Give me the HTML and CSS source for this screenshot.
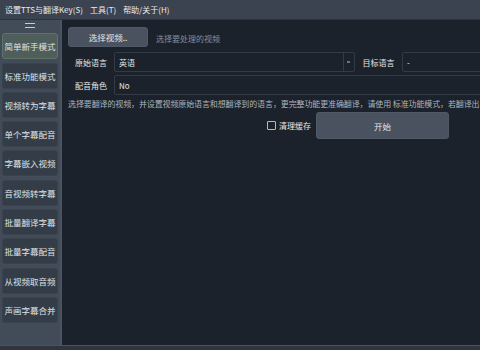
FILE: index.html
```html
<!DOCTYPE html>
<html lang="zh-CN">
<head>
    <meta charset="UTF-8">
    <title>pyVideoTrans</title>
    <link rel="stylesheet" href="styles.css">
</head>
<body>
    <div class="window">
        <div class="menubar">
            <span class="menu-item">设置TTS与翻译Key(S)</span>
            <span class="menu-item">工具(T)</span>
            <span class="menu-item">帮助/关于(H)</span>
        </div>

        <div class="body">
            <div class="sidebar">
                <div class="handle"></div>
                <button class="side-btn active">简单新手模式</button>
                <button class="side-btn">标准功能模式</button>
                <button class="side-btn">视频转为字幕</button>
                <button class="side-btn">单个字幕配音</button>
                <button class="side-btn">字幕嵌入视频</button>
                <button class="side-btn">音视频转字幕</button>
                <button class="side-btn">批量翻译字幕</button>
                <button class="side-btn">批量字幕配音</button>
                <button class="side-btn">从视频取音频</button>
                <button class="side-btn">声画字幕合并</button>
            </div>

            <div class="main">
                <div class="row">
                    <button class="btn btn-select">选择视频..</button>
                    <span class="placeholder">选择要处理的视频</span>
                </div>

                <div class="row">
                    <span class="label">原始语言</span>
                    <div class="combo combo-source">
                        <span class="combo-text">英语</span>
                        <span class="combo-arrow"></span>
                    </div>
                    <span class="label">目标语言</span>
                    <div class="combo combo-target">
                        <span class="combo-text">-</span>
                    </div>
                </div>

                <div class="row">
                    <span class="label">配音角色</span>
                    <div class="combo combo-voice">
                        <span class="combo-text">No</span>
                    </div>
                </div>

                <p class="hint">选择要翻译的视频，并设置视频原始语言和想翻译到的语言，更完整功能更准确翻译，请使用 标准功能模式，若翻译出</p>

                <div class="row row-start">
                    <label class="check">
                        <span class="check-box"></span>
                        清理缓存
                    </label>
                    <button class="btn btn-start">开始</button>
                </div>
            </div>
        </div>

        <div class="statusbar"></div>
    </div>
</body>
</html>
```

FILE: styles.css
```css
html, body {
    margin: 0;
    padding: 0;
    width: 480px;
    height: 350px;
    overflow: hidden;
    background-color: #1b222c;
    font-family: "Noto Sans CJK SC", "Noto Sans", sans-serif;
    font-size: 8px;
    color: #e4e6e9;
}
.window {
    display: flex;
    flex-direction: column;
    height: 350px;
}
.menubar {
    height: 19px;
    display: flex;
    align-items: center;
    gap: 7px;
    padding-left: 5px;
    background-color: #3b4350;
    border-bottom: 1px solid #2c333d;
    font-size: 8px;
    color: #e9ebee;
}
.body {
    flex: 1;
    display: flex;
    min-height: 0;
}
.sidebar {
    width: 60px;
    flex-shrink: 0;
    display: flex;
    flex-direction: column;
    align-items: center;
    gap: 3.3px;
    padding-top: 2px;
    background-color: #424b58;
    border-right: 2px solid #4a5361;
}
.handle {
    width: 10px;
    height: 3px;
    border-top: 1px solid #c9ced6;
    border-bottom: 1px solid #c9ced6;
    margin: 1px 0 2px;
}
.side-btn {
    width: 56px;
    height: 26px;
    flex-shrink: 0;
    padding: 0;
    font-family: inherit;
    font-size: 8.5px;
    color: #dfe2e6;
    background-color: #343c47;
    border: 1px solid #3a424d;
    border-radius: 3px;
}
.side-btn.active {
    background-color: #4f5e5a;
    border-color: #5d7566;
}
.main {
    flex: 1;
    min-width: 0;
    padding: 7px 0 0 6px;
    overflow: hidden;
}
.row {
    display: flex;
    align-items: center;
    margin-bottom: 3px;
    white-space: nowrap;
}
.btn {
    font-family: inherit;
    font-size: 8.5px;
    color: #e4e6e9;
    background-color: #4a5260;
    border: 1px solid #505967;
    border-radius: 3px;
}
.btn-select {
    width: 80px;
    height: 20px;
    margin-bottom: 2px;
}
.placeholder {
    margin-left: 8px;
    color: #878e98;
}
.label {
    width: 46px;
    text-align: center;
    flex-shrink: 0;
}
.combo {
    height: 20px;
    display: flex;
    align-items: center;
    background-color: #1b222c;
    border: 1px solid #333b46;
    border-radius: 2px;
    box-sizing: border-box;
    flex-shrink: 0;
}
.combo-text {
    flex: 1;
    padding-left: 4px;
}
.combo-arrow {
    width: 10px;
    height: 18px;
    border-left: 1px solid #333b46;
    position: relative;
}
.combo-arrow::after {
    content: "";
    position: absolute;
    left: 3px;
    top: 8px;
    width: 3px;
    height: 2px;
    background-color: #6b727c;
}
.combo-source {
    width: 241px;
}
.combo-source + .label {
    width: 47px;
}
.combo-target {
    width: 90px;
}
.combo-voice {
    width: 380px;
}
.hint {
    margin: 3px 0 0;
    white-space: nowrap;
    color: #aeb3ba;
    font-size: 8px;
    letter-spacing: -0.12px;
}
.row-start {
    margin-top: 3px;
    padding-left: 199px;
}
.check {
    display: flex;
    align-items: center;
    gap: 3px;
    margin-right: 5px;
}
.check-box {
    width: 7px;
    height: 7px;
    border: 1px solid #b6bbc2;
    border-radius: 1px;
}
.btn-start {
    width: 133px;
    height: 27px;
}
.statusbar {
    height: 4px;
    background-color: #2e3540;
    border-top: 1px solid #4a5361;
}
```
